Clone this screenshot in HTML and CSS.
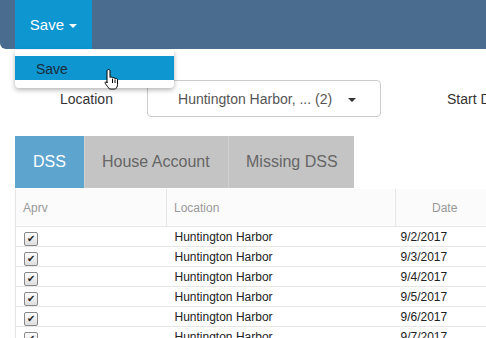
FILE: index.html
```html
<!DOCTYPE html>
<html lang="en">
<head>
  <meta charset="UTF-8">
  <title>DSS Approval</title>
  <link rel="stylesheet" href="styles.css">
</head>
<body>
  <div class="topbar">
    <button class="save-btn">Save <span class="caret"></span></button>
  </div>

  <div class="menu">
    <div class="menu-item">Save</div>
  </div>

  <svg class="cursor" width="18" height="22" viewBox="0 0 18 22">
    <path d="M5.5 1.5c1 0 1.5.6 1.5 1.5v6.5c.3-.6 2.6-.7 2.6.6.4-.7 2.5-.7 2.5.7.5-.6 2.4-.5 2.4 1v4.7c0 2-1 3.5-2 4.5H6.5c-1-1.3-3.4-4.1-4.2-5.6-.6-1.2.6-2.2 1.6-1.3L4 15V3c0-.9.5-1.5 1.5-1.5z" fill="#fff" stroke="#000" stroke-width="1"/>
    <path d="M9.5 11v4M12 11.5v3.5M14.5 12v3" stroke="#000" stroke-width="1"/>
  </svg>

  <div class="filters">
    <label class="filter-label">Location</label>
    <button class="select">Huntington Harbor, ... (2) <span class="caret dark"></span></button>
    <label class="filter-label start">Start Date</label>
  </div>

  <div class="tabs">
    <div class="tab active">DSS</div>
    <div class="tab">House Account</div>
    <div class="tab">Missing DSS</div>
  </div>

  <table class="grid">
    <thead>
      <tr>
        <th class="col-aprv">Aprv</th>
        <th class="col-loc">Location</th>
        <th class="col-date">Date</th>
      </tr>
    </thead>
    <tbody>
      <tr><td><span class="check">&#10004;</span></td><td>Huntington Harbor</td><td>9/2/2017</td></tr>
      <tr><td><span class="check">&#10004;</span></td><td>Huntington Harbor</td><td>9/3/2017</td></tr>
      <tr><td><span class="check">&#10004;</span></td><td>Huntington Harbor</td><td>9/4/2017</td></tr>
      <tr><td><span class="check">&#10004;</span></td><td>Huntington Harbor</td><td>9/5/2017</td></tr>
      <tr><td><span class="check">&#10004;</span></td><td>Huntington Harbor</td><td>9/6/2017</td></tr>
      <tr><td><span class="check">&#10004;</span></td><td>Huntington Harbor</td><td>9/7/2017</td></tr>
    </tbody>
  </table>
</body>
</html>
```

FILE: styles.css
```css
body {
  margin: 0;
  font-family: "Liberation Sans", Arial, sans-serif;
  background: #fff;
  overflow: hidden;
  width: 486px;
  height: 338px;
  position: relative;
}
.topbar {
  height: 49px;
  background: #4a6d8f;
  border-bottom-left-radius: 6px;
  padding-left: 15px;
  display: flex;
}
.save-btn {
  width: 77px;
  height: 49px;
  background: #0d96d0;
  color: #fff;
  border: none;
  font-family: inherit;
  font-size: 15px;
  padding: 0;
}
.caret {
  display: inline-block;
  width: 0;
  height: 0;
  border-left: 4px solid transparent;
  border-right: 4px solid transparent;
  border-top: 4px solid #fff;
  vertical-align: middle;
  margin-left: 1px;
}
.caret.dark { border-top-color: #333; margin-left: 12px; }
.menu {
  position: absolute;
  top: 50px;
  left: 15px;
  width: 159px;
  height: 38px;
  background: #fff;
  border-radius: 0 0 4px 4px;
  box-shadow: 0 2px 5px rgba(0, 0, 0, 0.3);
  padding-top: 6px;
  box-sizing: border-box;
}
.menu-item {
  height: 24px;
  line-height: 26px;
  background: #0d96d0;
  color: #1c2b3a;
  font-size: 14px;
  padding-left: 21px;
}
.cursor {
  position: absolute;
  left: 103px;
  top: 68px;
}
.filters {
  display: flex;
  align-items: center;
  height: 37px;
  margin-top: 31px;
  white-space: nowrap;
}
.filter-label {
  flex-shrink: 0;
  font-size: 14px;
  color: #333;
  margin-left: 60px;
  width: 87px;
}
.filter-label.start { margin-left: 66px; width: auto; }
.select {
  flex-shrink: 0;
  width: 234px;
  height: 37px;
  background: #fff;
  border: 1px solid #ccc;
  border-radius: 4px;
  font-family: inherit;
  font-size: 14px;
  color: #555;
  padding: 0 0 0 6px;
}
.tabs {
  display: flex;
  margin: 19px 0 0 15px;
  height: 52px;
  white-space: nowrap;
}
.tab {
  flex-shrink: 0;
  box-sizing: border-box;
  background: #c4c4c4;
  color: #666;
  font-size: 16px;
  line-height: 52px;
  padding-left: 17px;
  border-left: 1px solid #d0d0d0;
}
.tab.active {
  background: #5da4cf;
  color: #fff;
  width: 69px;
  padding-left: 18px;
  border-left: none;
}
.tab:nth-child(2) { width: 144px; }
.tab:nth-child(3) { width: 126px; }
.grid {
  margin: 1px 0 0 15px;
  border-collapse: collapse;
  width: 600px;
  table-layout: fixed;
  font-size: 12px;
  color: #222;
}
.grid th {
  height: 37px;
  background: #fbfbfb;
  color: #999;
  font-weight: normal;
  text-align: left;
  padding: 0 7px;
  border-left: 1px solid #e6e6e6;
  border-bottom: 1px solid #e6e6e6;
}
.grid th.col-aprv { width: 136px; }
.grid th.col-loc { width: 214px; }
.grid th.col-date { padding-left: 36px; }
.grid td {
  height: 19px;
  padding: 0 7px 0 6px;
  border-bottom: 1px solid #e6e6e6;
}
.grid td:first-child, .grid th:first-child { border-left: 1px solid #e6e6e6; }
.grid td:nth-child(2) { padding-left: 8px; }
.grid td:nth-child(3) { padding-left: 5px; }
.check {
  display: inline-block;
  width: 12px;
  height: 12px;
  border: 1px solid #888;
  border-radius: 2px;
  background: linear-gradient(#fff, #ddd);
  font-size: 10px;
  line-height: 12px;
  text-align: center;
  color: #222;
  margin: 4px 0 0 2px;
}
```
